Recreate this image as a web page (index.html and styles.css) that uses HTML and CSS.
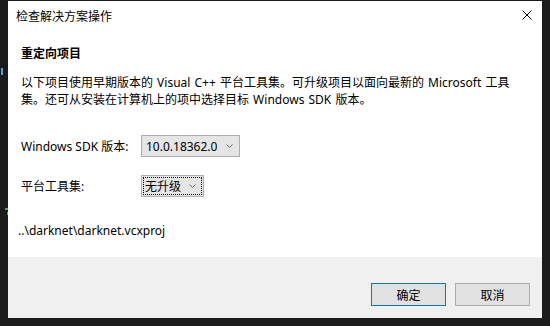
FILE: index.html
```html
<!DOCTYPE html>
<html lang="zh-CN">
<head>
    <meta charset="UTF-8">
    <title>检查解决方案操作</title>
    <link rel="stylesheet" href="styles.css">
</head>
<body>
    <div class="editor-edge">
        <div class="mark blue"></div>
        <div class="mark green"></div>
        <div class="mark green small"></div>
    </div>
    <div class="dialog">
        <div class="titlebar">
            <span class="title">检查解决方案操作</span>
            <svg class="close" width="10" height="10" viewBox="0 0 10 10">
                <path d="M0.5 0.5 L9.5 9.5 M9.5 0.5 L0.5 9.5" stroke="#000" stroke-width="1" fill="none"/>
            </svg>
        </div>
        <div class="content">
            <h3>重定向项目</h3>
            <p class="intro">以下项目使用早期版本的 Visual C++ 平台工具集。可升级项目以面向最新的 Microsoft 工具<br>集。还可从安装在计算机上的项中选择目标 Windows SDK 版本。</p>
            <div class="fields">
                <label>Windows SDK 版本:</label>
                <div class="combo sdk">
                    <span class="combo-text">10.0.18362.0</span>
                    <svg class="chevron" width="7" height="4" viewBox="0 0 7 4"><path d="M0.5 0.5 L3.5 3.5 L6.5 0.5" stroke="#666" fill="none"/></svg>
                </div>
                <label>平台工具集:</label>
                <div class="combo toolset">
                    <div class="focus">
                        <span class="combo-text">无升级</span>
                        <svg class="chevron" width="7" height="4" viewBox="0 0 7 4"><path d="M0.5 0.5 L3.5 3.5 L6.5 0.5" stroke="#666" fill="none"/></svg>
                    </div>
                </div>
            </div>
            <div class="project-path">..\darknet\darknet.vcxproj</div>
        </div>
        <div class="footer">
            <button class="btn default">确定</button>
            <button class="btn">取消</button>
        </div>
    </div>
</body>
</html>
```

FILE: styles.css
```css
body {
    margin: 0;
    width: 550px;
    height: 326px;
    background-color: #1b1b1b;
    display: flex;
    align-items: flex-start;
    padding-top: 1px;
    box-sizing: border-box;
    font-family: "Noto Sans", "Noto Sans CJK SC", sans-serif;
    font-size: 12px;
    color: #000;
    overflow: hidden;
}
.editor-edge {
    width: 8px;
    height: 317px;
    display: flex;
    flex-direction: column;
}
.mark {
    width: 2px;
    height: 7px;
}
.mark.blue {
    background-color: #569cd6;
    margin: 67px 0 0 1px;
}
.mark.green {
    background-color: #57a64a;
    width: 3px;
    height: 2px;
    margin: 133px 0 0 5px;
}
.mark.small {
    width: 1px;
    height: 3px;
    margin: 2px 0 0 7px;
}
.dialog {
    width: 534px;
    height: 317px;
    background-color: #fff;
    display: flex;
    flex-direction: column;
}
.titlebar {
    height: 30px;
    display: flex;
    align-items: center;
    justify-content: space-between;
    padding: 0 10px 0 8px;
}
.title {
    line-height: 17px;
}
.close {
    margin-top: -2px;
}
.content {
    flex: 1;
    padding-left: 13px;
}
h3 {
    margin: 14px 0 0;
    font-size: 12px;
    line-height: 17px;
    font-weight: bold;
}
.intro {
    margin: 12px 0 0;
    line-height: 17px;
    white-space: nowrap;
    word-spacing: 1px;
}
.fields {
    display: grid;
    grid-template-columns: 120px auto;
    row-gap: 18px;
    align-items: center;
    justify-items: start;
    margin-top: 27px;
}
.combo {
    height: 22px;
    box-sizing: border-box;
    border: 1px solid #adadad;
    background-color: #e5e5e5;
    display: flex;
    align-items: center;
}
.combo-text {
    line-height: 17px;
}
.sdk {
    width: 99px;
    padding: 0 6px 0 4px;
    justify-content: space-between;
}
.toolset {
    width: 63px;
    padding: 1px;
}
.focus {
    flex: 1;
    height: 18px;
    box-sizing: border-box;
    border: 1px dotted #000;
    display: flex;
    align-items: center;
    justify-content: space-between;
    padding: 0 5px 0 1px;
}
.chevron {
    display: block;
}
.project-path {
    margin: 25px 0 0 -3px;
    line-height: 17px;
}
.footer {
    height: 61px;
    background-color: #f0f0f0;
    display: flex;
    justify-content: flex-end;
    align-items: flex-start;
    gap: 9px;
    padding: 26px 12px 0 0;
    box-sizing: border-box;
}
.btn {
    width: 75px;
    height: 23px;
    border: 1px solid #adadad;
    background-color: #e1e1e1;
    font-family: inherit;
    font-size: 12px;
    color: #000;
    padding: 0;
}
.btn.default {
    border-color: #0078d7;
}
```
